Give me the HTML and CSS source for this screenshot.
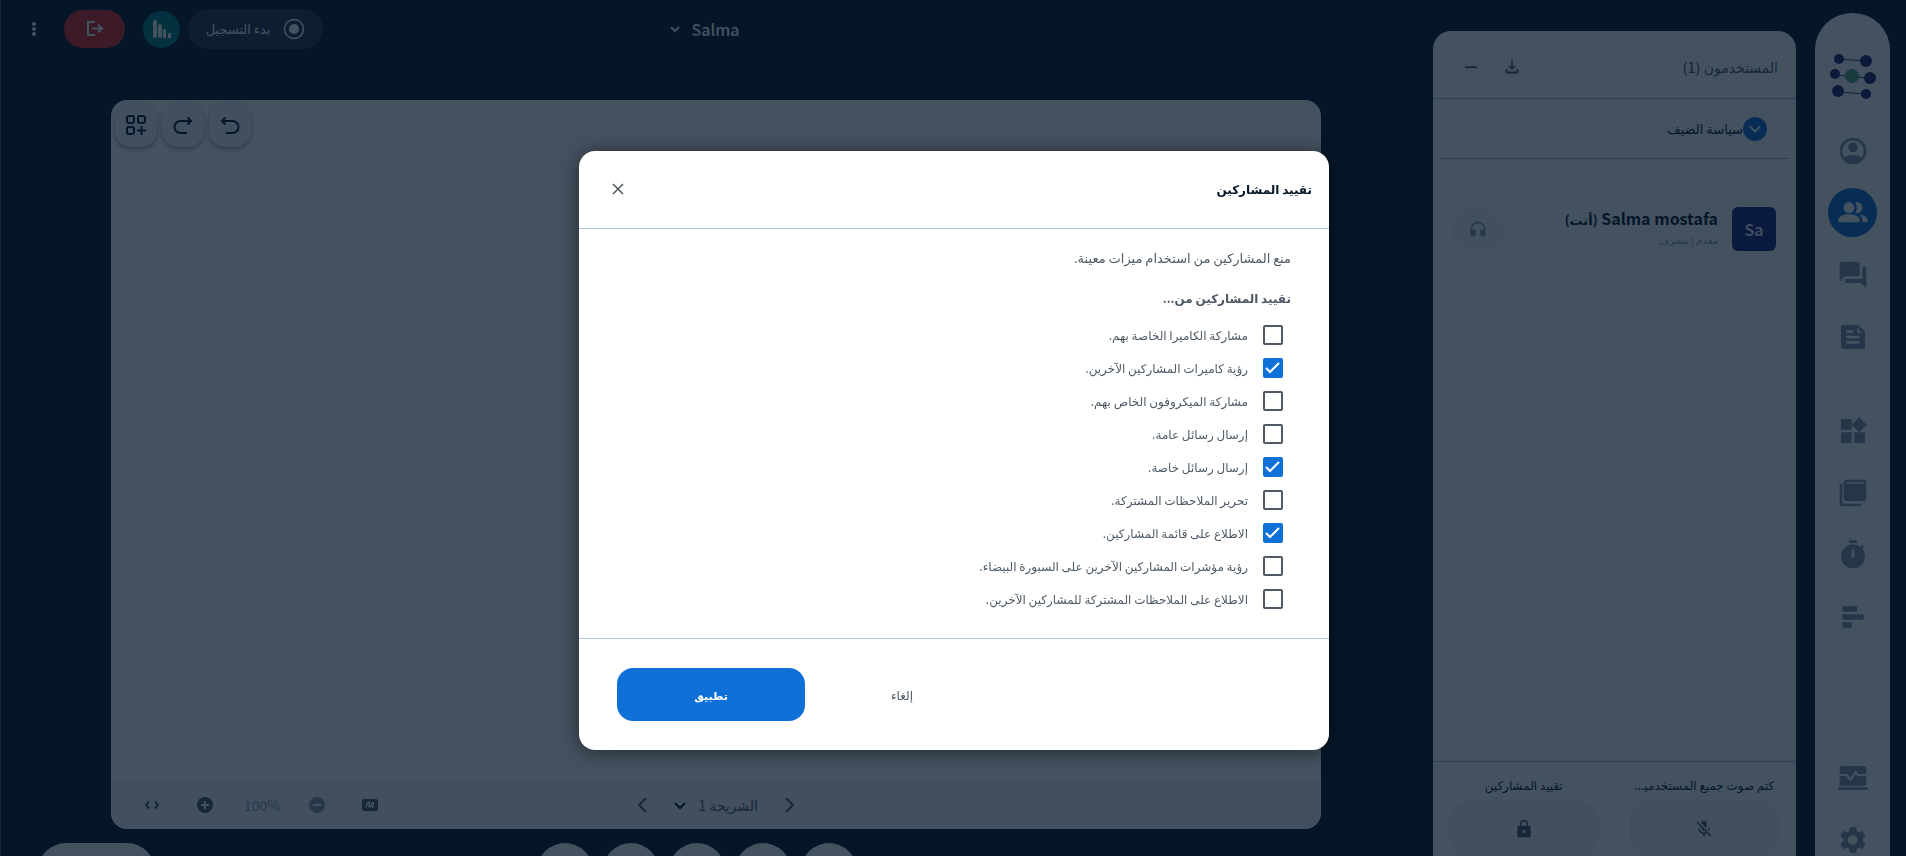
FILE: index.html
```html
<!DOCTYPE html>
<html lang="ar" dir="rtl">
<head>
    <meta charset="UTF-8">
    <meta name="viewport" content="width=device-width, initial-scale=1.0">
    <title>Salma</title>
    <link rel="stylesheet" href="styles.css">
</head>
<body>

    <div class="app">

        <nav class="sidebar" aria-label="القائمة">
            <svg class="logo" viewBox="0 0 46 46">
                <g stroke="#3c3a80" stroke-width="1">
                    <path d="M9 6 36 8M5 22 39 25M9 39 36 41"/>
                </g>
                <g fill="#20206e">
                    <circle cx="9" cy="6" r="5"/><circle cx="36" cy="8" r="6"/>
                    <circle cx="5" cy="21" r="5"/><circle cx="40" cy="25" r="6"/>
                    <circle cx="8" cy="38" r="6"/><circle cx="36" cy="41" r="5"/>
                </g>
                <circle cx="22" cy="23" r="7" fill="#56a878"/>
            </svg>
            <div class="grupo">
                <button class="item" aria-label="الملف الشخصي"><svg class="ic32" viewBox="0 0 24 24"><circle cx="12" cy="12" r="9" fill="none" stroke="currentColor" stroke-width="2"/><circle cx="12" cy="9.300" r="3.600"/><path d="M4.500 17.500c2-1.600 4.600-2.500 7.500-2.500s5.500.900 7.500 2.500A9.500 9.500 0 0 1 12 21.500a9.500 9.500 0 0 1-7.500-4z"/></svg></button>
                <button class="item ativo" aria-label="المستخدمون"><svg class="ic32" viewBox="0 0 24 24"><path d="M16.670 13.130C18.040 14.060 19 15.320 19 17v2h4v-2c0-2.180-3.570-3.470-6.330-3.870zM15 12c2.210 0 4-1.790 4-4s-1.790-4-4-4c-.470 0-.910.100-1.330.240a5.980 5.980 0 0 1 0 7.520c.420.140.860.240 1.330.240zM9 12c2.210 0 4-1.790 4-4s-1.790-4-4-4-4 1.790-4 4 1.790 4 4 4zm0 1c-2.670 0-8 1.340-8 4v2h16v-2c0-2.660-5.330-4-8-4z"/></svg></button>
                <button class="item" aria-label="الدردشة"><svg class="ic32" viewBox="0 0 24 24"><path d="M21 6h-2v9H6v2c0 .550.450 1 1 1h11l4 4V7c0-.550-.450-1-1-1zm-4 6V3c0-.550-.450-1-1-1H3c-.550 0-1 .450-1 1v14l4-4h10c.550 0 1-.450 1-1z"/></svg></button>
                <button class="item" aria-label="الملاحظات"><svg class="ic32" viewBox="0 0 24 24"><path d="M16 3H5a2 2 0 0 0-2 2v14c0 1.100.900 2 2 2h14a2 2 0 0 0 2-2V8zM7 7h5v2H7zm10 10H7v-2h10zm0-4H7v-2h10zm-2-4V5l4 4z"/></svg></button>
            </div>
            <div class="grupo">
                <button class="item" aria-label="التطبيقات"><svg class="ic32" viewBox="0 0 24 24"><path d="M13 13v8h8v-8zM3 21h8v-8H3zM3 3v8h8V3zm13.660-1.310L11 7.340 16.660 13l5.660-5.660z"/></svg></button>
                <button class="item" aria-label="العرض التقديمي"><svg class="ic32" viewBox="0 0 24 24"><path d="M2 5v15a2 2 0 0 0 2 2h14v-2H4V5zM20 2H7a2 2 0 0 0-2 2v12c0 1.100.900 2 2 2h13a2 2 0 0 0 2-2V4a2 2 0 0 0-2-2zm0 3H7V4h13z"/></svg></button>
                <button class="item" aria-label="المؤقت"><svg class="ic32" viewBox="0 0 24 24"><path d="M9 1h6v2H9zm10.030 6.390 1.420-1.420c-.430-.510-.900-.990-1.410-1.410l-1.420 1.420A8.960 8.960 0 0 0 12 4a9 9 0 1 0 7.030 3.390zM13 14h-2V8h2z"/></svg></button>
                <button class="item" aria-label="استطلاع"><svg class="ic32" viewBox="0 0 24 24"><path d="M4 4h11v4H4zm0 6h16v4H4zm0 6h7v4H4z"/></svg></button>
            </div>
            <div class="grupo fim">
                <button class="item" aria-label="حالة الاتصال"><svg class="ic32" viewBox="0 0 24 24"><path d="M2 9V5a2 2 0 0 1 2-2h16a2 2 0 0 1 2 2v4h-6l-2-3-4 6-2-3zM2 10.500h5L10 15l4-6 1 1.500h7V16a2 2 0 0 1-2 2H4a2 2 0 0 1-2-2zM1 19h22v2H1z"/></svg></button>
                <button class="item" aria-label="الإعدادات"><svg class="ic32" viewBox="0 0 24 24"><path d="M19.140 12.940c.040-.300.060-.610.060-.940 0-.320-.020-.640-.070-.940l2.030-1.580a.490.490 0 0 0 .120-.610l-1.920-3.320a.490.490 0 0 0-.590-.220l-2.390.960c-.500-.380-1.030-.700-1.620-.940l-.360-2.540a.480.480 0 0 0-.480-.410h-3.840c-.240 0-.430.170-.470.410l-.360 2.540c-.590.240-1.130.570-1.620.940l-2.390-.960a.480.480 0 0 0-.590.220L2.740 8.870c-.120.210-.080.470.120.610l2.030 1.580c-.050.300-.090.630-.090.940s.020.640.070.940l-2.030 1.580a.490.490 0 0 0-.120.610l1.920 3.320c.120.220.370.290.590.220l2.390-.960c.500.380 1.030.700 1.620.940l.360 2.540c.050.240.240.410.480.410h3.840c.240 0 .440-.170.470-.410l.360-2.540c.590-.240 1.130-.560 1.620-.940l2.390.960c.220.080.470 0 .590-.220l1.920-3.320a.490.490 0 0 0-.120-.610zM12 15.600A3.610 3.610 0 1 1 12 8.400a3.610 3.610 0 0 1 0 7.200z"/></svg></button>
            </div>
        </nav>

        <aside class="painel">
            <header class="painel-topo">
                <h2>المستخدمون (1)</h2>
                <button class="icone" aria-label="تنزيل"><svg width="18" height="18" viewBox="0 0 24 24"><path d="M18 15v3H6v-3H3.500v3.500a2 2 0 0 0 2 2h13a2 2 0 0 0 2-2V15zM17 11l-1.400-1.400-2.600 2.600V3h-2v9.200L8.400 9.600 7 11l5 5z"/></svg></button>
                <button class="icone" aria-label="تصغير"><svg width="18" height="18" viewBox="0 0 24 24"><path d="M4 11h16v2.500H4z"/></svg></button>
            </header>
            <button class="politica">
                <span class="seta"><svg width="24" height="24" viewBox="0 0 24 24"><path d="m7 9.500 5 5 5-5" fill="none" stroke="#fff" stroke-width="2"/></svg></span>
                <span>سياسة الضيف</span>
            </button>
            <div class="usuario">
                <div class="avatar" dir="ltr">Sa</div>
                <div class="nome">
                    <strong><bdi>Salma mostafa</bdi> <span>(أنت)</span></strong>
                    <small>مقدم | مشرف</small>
                </div>
                <span class="fone"><svg width="20" height="20" viewBox="0 0 24 24"><path d="M12 3a9 9 0 0 0-9 9v7c0 1.100.900 2 2 2h4v-8H5v-1a7 7 0 0 1 14 0v1h-4v8h4a2 2 0 0 0 2-2v-7a9 9 0 0 0-9-9z"/></svg></span>
            </div>
            <footer class="painel-fim">
                <div class="acao">
                    <label for="mudo">كتم صوت جميع المستخدمي&zwj;...</label>
                    <button id="mudo"><svg width="20" height="20" viewBox="0 0 24 24"><path d="M19 11h-1.700c0 .740-.160 1.430-.430 2.050l1.230 1.230c.560-.980.900-2.090.900-3.280zm-4.020.170c0-.060.020-.110.020-.170V5a3 3 0 0 0-6 0v.180zM4.270 3 3 4.270l6.010 6.010V11c0 1.660 1.330 3 2.990 3 .220 0 .440-.030.650-.080l1.660 1.660c-.710.330-1.500.520-2.310.520-2.760 0-5.300-2.100-5.300-5.100H5c0 3.410 2.720 6.230 6 6.720V21h2v-3.280c.910-.130 1.770-.450 2.540-.900L19.730 21 21 19.730z"/></svg></button>
                </div>
                <div class="acao">
                    <label for="restringir">تقييد المشاركين</label>
                    <button id="restringir"><svg width="20" height="20" viewBox="0 0 24 24"><path d="M18 8h-1V6A5 5 0 0 0 7 6v2H6a2 2 0 0 0-2 2v10c0 1.100.900 2 2 2h12a2 2 0 0 0 2-2V10a2 2 0 0 0-2-2zm-6 9a2 2 0 1 1 0-4 2 2 0 0 1 0 4zm3.100-9H8.900V6a3.100 3.100 0 0 1 6.200 0z"/></svg></button>
                </div>
            </footer>
        </aside>

        <main class="sala">
            <header class="barra">
                <div></div>
                <button class="titulo">Salma <svg width="10" height="10" viewBox="0 0 10 10"><path d="m1 3 4 4 4-4" fill="none" stroke="currentColor" stroke-width="2"/></svg></button>
                <div class="controles">
                    <button class="gravar"><svg width="22" height="22" viewBox="0 0 22 22"><circle cx="11" cy="11" r="9.500" fill="none" stroke="currentColor" stroke-width="1.500"/><circle cx="11" cy="11" r="5"/></svg><span>بدء التسجيل</span></button>
                    <button class="conexao" aria-label="حالة الاتصال"><svg width="20" height="20" viewBox="0 0 20 20"><rect x="1" y="1" width="4" height="18" rx="2"/><rect x="6" y="5" width="4" height="14" rx="2"/><rect x="11" y="10" width="3" height="9" rx="1"/><rect x="16" y="14" width="3" height="5" rx="1"/></svg></button>
                    <button class="sair" aria-label="مغادرة"><svg width="18" height="18" viewBox="0 0 18 18"><path d="M9 2H2v13h7M6 8.500h10M12 4.500l4 4-4 4" fill="none" stroke="currentColor" stroke-width="2"/></svg></button>
                    <button class="mais" aria-label="خيارات"><svg width="6" height="16" viewBox="0 0 6 16"><circle cx="3" cy="3" r="2"/><circle cx="3" cy="8" r="2"/><circle cx="3" cy="13" r="2"/></svg></button>
                </div>
            </header>

            <section class="quadro">
                <div class="ferramentas" dir="ltr">
                    <button aria-label="المزيد"><svg width="22" height="22" viewBox="0 0 22 22"><rect x="2" y="2" width="7" height="7" rx="2"/><rect x="13" y="2" width="7" height="7" rx="2"/><rect x="2" y="13" width="7" height="7" rx="2"/><path d="M16.500 12v9M12 16.500h9"/></svg></button>
                    <button aria-label="إعادة"><svg width="20" height="20" viewBox="0 0 20 20"><path d="M14 18H7.500a6 6 0 0 1 0-12H18M14.500 2.500 18 6l-3.500 3.500"/></svg></button>
                    <button aria-label="تراجع"><svg width="20" height="20" viewBox="0 0 20 20"><path d="M6 18h6.500a6 6 0 0 0 0-12H2M5.500 2.500 2 6l3.500 3.500"/></svg></button>
                </div>
                <div class="rodape">
                    <div></div>
                    <div class="slides">
                        <button aria-label="التالي"><svg width="16" height="16" viewBox="0 0 16 16"><path d="m4 1 7 7-7 7" fill="none" stroke="currentColor" stroke-width="2"/></svg></button>
                        <select aria-label="الشريحة"><option>الشريحة 1</option></select>
                        <button aria-label="السابق"><svg width="16" height="16" viewBox="0 0 16 16"><path d="m12 1-7 7 7 7" fill="none" stroke="currentColor" stroke-width="2"/></svg></button>
                    </div>
                    <div class="zoom" dir="ltr">
                        <button aria-label="ملء الشاشة"><svg width="16" height="16" viewBox="0 0 16 16"><path d="M5 4.500 2 8l3 3.500M11 4.500 14 8l-3 3.500" fill="none" stroke="currentColor" stroke-width="2"/></svg></button>
                        <button aria-label="تكبير"><svg width="16" height="16" viewBox="0 0 16 16"><circle cx="8" cy="8" r="8"/><path d="M8 4v8M4 8h8" stroke="#f8f8fb" stroke-width="2"/></svg></button>
                        <span>100%</span>
                        <button class="apagado" aria-label="تصغير"><svg width="16" height="16" viewBox="0 0 16 16"><circle cx="8" cy="8" r="8"/><path d="M4 8h8" stroke="#f8f8fb" stroke-width="2"/></svg></button>
                        <button aria-label="الكتابة"><svg width="16" height="16" viewBox="0 0 16 16"><rect y="2" width="16" height="12" rx="2"/><path d="M3 10c2 0 2-5 4-5 1 0-1 6 1 5s1-5 3-4-2 5 0 4" fill="none" stroke="#f8f8fb" stroke-width="1.500"/></svg></button>
                    </div>
                </div>
            </section>

            <footer class="botoes">
                <div></div>
                <div class="redondos">
                    <button aria-label="يد"></button>
                    <button aria-label="شاشة"></button>
                    <button aria-label="كاميرا"></button>
                    <button aria-label="صوت"></button>
                    <button aria-label="تفاعل"></button>
                </div>
                <button class="pilula" aria-label="تخطيط"></button>
            </footer>
        </main>
    </div>

    <div class="fundo">
        <form class="modal" role="dialog" aria-labelledby="tit">
            <header class="modal-topo">
                <h1 id="tit">تقييد المشاركين</h1>
                <button type="button" class="fechar" aria-label="إغلاق"><svg width="12" height="12" viewBox="0 0 12 12"><path d="m1 1 10 10M11 1 1 11" stroke="currentColor" stroke-width="1.500"/></svg></button>
            </header>
            <div class="modal-corpo">
                <p>منع المشاركين من استخدام ميزات معينة.</p>
                <h3>تقييد المشاركين من...</h3>
                <ul>
                    <li><label><input type="checkbox">مشاركة الكاميرا الخاصة بهم.</label></li>
                    <li><label><input type="checkbox" checked>رؤية كاميرات المشاركين الآخرين.</label></li>
                    <li><label><input type="checkbox">مشاركة الميكروفون الخاص بهم.</label></li>
                    <li><label><input type="checkbox">إرسال رسائل عامة.</label></li>
                    <li><label><input type="checkbox" checked>إرسال رسائل خاصة.</label></li>
                    <li><label><input type="checkbox">تحرير الملاحظات المشتركة.</label></li>
                    <li><label><input type="checkbox" checked>الاطلاع على قائمة المشاركين.</label></li>
                    <li><label><input type="checkbox">رؤية مؤشرات المشاركين الآخرين على السبورة البيضاء.</label></li>
                    <li><label><input type="checkbox">الاطلاع على الملاحظات المشتركة للمشاركين الآخرين.</label></li>
                </ul>
            </div>
            <footer class="modal-fim">
                <button type="button" class="cancelar">إلغاء</button>
                <button type="button" class="aplicar">تطبيق</button>
            </footer>
        </form>
    </div>

</body>
</html>
```
FILE: styles.css
```css
@charset "utf-8";

*{
    padding: 0px;
    margin: 0px;
    box-sizing: border-box;
}
body{
    background-color: #06172a;
    font: 14px/20px "Noto Sans CJK SC", "DejaVu Sans", sans-serif;
    color: #4e5a66;
    overflow: hidden;
}
button, select, input{
    font: inherit;
    color: inherit;
    border: none;
    background: none;
}
button{
    display: flex;
    align-items: center;
    justify-content: center;
    cursor: pointer;
}
svg{
    display: block;
    fill: currentColor;
    flex: none;
}
.app{
    display: flex;
    gap: 19px;
    height: 100vh;
    padding-right: 16px;
    border-left: 1px solid #4e5a66;
    overflow: hidden;
}

/* barra lateral */
.sidebar{
    display: flex;
    flex-direction: column;
    align-items: center;
    width: 75px;
    margin-top: 13px;
    padding-top: 40px;
    border-radius: 37px 37px 0 0;
    background-color: white;
    color: #8494a2;
}
.logo{
    width: 46px;
    height: 46px;
    margin-bottom: 27px;
}
.grupo{
    display: flex;
    flex-direction: column;
    gap: 13px;
    margin-bottom: 45px;
}
.grupo.fim{
    margin-top: auto;
    margin-bottom: -8px;
}
.item{
    width: 49px;
    height: 49px;
    border-radius: 50%;
}
.ic32{
    width: 32px;
    height: 32px;
}
.ativo{
    background-color: #0f70d7;
    color: white;
}

/* painel de usuarios */
.painel{
    display: flex;
    flex-direction: column;
    width: 363px;
    margin-top: 31px;
    border-radius: 18px 18px 0 0;
    background-color: white;
}
.painel-topo{
    display: flex;
    align-items: center;
    gap: 23px;
    height: 68px;
    padding: 4px 18px 0 29px;
    border-bottom: 1px solid #a7b9cc;
}
.painel-topo h2{
    flex: 1;
    font-size: 14px;
    font-weight: 500;
}
.politica{
    justify-content: flex-start;
    height: 60px;
    margin: 0 7px 0 6px;
    padding-right: 22px;
    border-bottom: 1px solid #a7b9cc;
    color: #06172a;
    font-size: 13px;
}
.seta{
    border-radius: 50%;
    background-color: #0f70d7;
    color: white;
}
.usuario{
    display: flex;
    align-items: center;
    gap: 14px;
    padding: 48px 20px 0 18px;
}
.avatar{
    width: 44px;
    height: 44px;
    border-radius: 6px;
    background-color: #1a237e;
    color: white;
    font-size: 16px;
    font-weight: 500;
    line-height: 44px;
    text-align: center;
}
.nome{
    flex: 1;
    display: flex;
    flex-direction: column;
}
.nome strong{
    color: #06172a;
    font-size: 16px;
}
.nome span{
    font-size: 13px;
}
.nome small{
    color: #8c9caa;
    font-size: 10px;
}
.fone{
    display: flex;
    align-items: center;
    justify-content: center;
    width: 53px;
    height: 44px;
    border-radius: 50%;
    background-color: #f8f8fb;
    color: #8c9caa;
}
.painel-fim{
    display: flex;
    gap: 33px;
    margin-top: auto;
    padding: 13px 18px 1px 17px;
    border-top: 1px solid #a7b9cc;
    color: #06172a;
}
.acao{
    flex: 1;
    min-width: 0;
    font-size: 12px;
    text-align: center;
}
.acao label{
    display: block;
    white-space: nowrap;
}
.acao button{
    width: 100%;
    height: 53px;
    margin-top: 7px;
    border: 1px solid #e9ebf3;
    border-radius: 18px;
    background-color: #f8f8fb;
    color: #4e5a66;
}

/* sala */
.sala{
    flex: 1;
    display: flex;
    flex-direction: column;
}
.barra{
    display: grid;
    grid-template-columns: 1fr auto 1fr;
    align-items: center;
    height: 58px;
    padding: 0 29px 0 23px;
    color: white;
}
.titulo{
    gap: 12px;
    font-size: 16px;
    font-weight: 500;
}
.controles{
    display: flex;
    align-items: center;
    justify-content: flex-end;
}
.gravar{
    gap: 13px;
    width: 135px;
    height: 40px;
    border-radius: 20px;
    background-color: #263748;
    font-size: 13px;
}
.conexao{
    width: 37px;
    height: 37px;
    margin-right: 8px;
    border-radius: 50%;
    background-color: #008081;
}
.sair{
    width: 61px;
    height: 38px;
    margin-right: 18px;
    border-radius: 19px;
    background-color: #df2721;
}
.mais{
    width: 20px;
    height: 38px;
    margin-right: 20px;
}
.quadro{
    flex: 1;
    display: flex;
    flex-direction: column;
    justify-content: space-between;
    margin: 42px 93px 0 110px;
    border-radius: 16px;
    background-color: white;
    overflow: hidden;
}
.ferramentas{
    display: flex;
    gap: 5px;
    padding: 3px 4px;
}
.ferramentas button{
    width: 42px;
    height: 44px;
    border-radius: 16px;
    background-color: #f8f8fb;
    box-shadow: 0 2px 4px rgba(6, 23, 42, 0.4);
    color: #06172a;
}
.ferramentas svg{
    fill: none;
    stroke: currentColor;
    stroke-width: 2;
}
.rodape{
    display: grid;
    grid-template-columns: 1fr auto 1fr;
    align-items: center;
    height: 49px;
    padding: 0 33px;
    background-color: #f8f8fb;
}
.slides{
    display: flex;
    align-items: center;
    gap: 24px;
}
.slides select{
    appearance: none;
    width: 84px;
    height: 24px;
    background: url("data:image/svg+xml,%3Csvg xmlns='http://www.w3.org/2000/svg' width='12' height='10'%3E%3Cpath d='m1 3 5 5 5-5' fill='none' stroke='%2306172a' stroke-width='2'/%3E%3C/svg%3E") left center no-repeat;
}
.zoom{
    display: flex;
    align-items: center;
    justify-self: end;
    gap: 37px;
}
.zoom .apagado{
    opacity: 0.6;
}
.zoom span{
    width: 34px;
    margin: 0 -6px;
    text-align: center;
    color: #8c9caa;
}
.botoes{
    display: grid;
    grid-template-columns: 1fr auto 1fr;
    height: 27px;
    padding: 14px 59px 0 37px;
}
.botoes button{
    height: 56px;
    border-radius: 28px;
    background-color: white;
}
.redondos{
    display: flex;
    gap: 10px;
}
.redondos button{
    width: 56px;
}
.botoes .pilula{
    width: 117px;
    justify-self: end;
}

/* janela */
.fundo{
    position: fixed;
    inset: 0;
    display: flex;
    justify-content: center;
    align-items: flex-start;
    padding: 151px 0 0 2px;
    background-color: rgba(6, 23, 42, 0.75);
}
.modal{
    width: 750px;
    max-width: 100%;
    border-radius: 16px;
    background-color: white;
    box-shadow: 0 2px 20px rgba(0, 0, 0, 0.5);
}
.modal-topo{
    display: flex;
    align-items: center;
    justify-content: space-between;
    height: 78px;
    padding: 0 17px 2px 29px;
    border-bottom: 1px solid #b0c4d8;
}
.modal-topo h1{
    color: #06172a;
    font-size: 12px;
    font-weight: 700;
}
.fechar{
    width: 20px;
    height: 20px;
}
.modal-corpo{
    padding: 19px 38px 23px;
}
.modal-corpo p{
    font-size: 13px;
}
.modal-corpo h3{
    margin-top: 20px;
    margin-bottom: 10px;
    font-size: 12px;
}
.modal-corpo ul{
    list-style: none;
}
.modal-corpo label{
    display: flex;
    align-items: center;
    gap: 15px;
    height: 33px;
    padding-right: 8px;
    font-size: 12px;
}
.modal-corpo input{
    appearance: none;
    width: 20px;
    height: 20px;
    border: 2px solid #4e5a66;
    border-radius: 2px;
}
.modal-corpo input:checked{
    border-color: #0f70d7;
    background: #0f70d7 url("data:image/svg+xml,%3Csvg xmlns='http://www.w3.org/2000/svg' width='16' height='16'%3E%3Cpath d='m1 8 4 4 9-9' fill='none' stroke='white' stroke-width='2'/%3E%3C/svg%3E") center no-repeat;
}
.modal-fim{
    display: flex;
    justify-content: flex-end;
    gap: 3px;
    padding: 29px 38px;
    border-top: 1px solid #b0c4d8;
}
.modal-fim button{
    width: 188px;
    height: 53px;
    border-radius: 16px;
    font-size: 12px;
    font-weight: 500;
}
.modal-fim .aplicar{
    background-color: #0f70d7;
    color: white;
    font-size: 11px;
    font-weight: 700;
}
```
